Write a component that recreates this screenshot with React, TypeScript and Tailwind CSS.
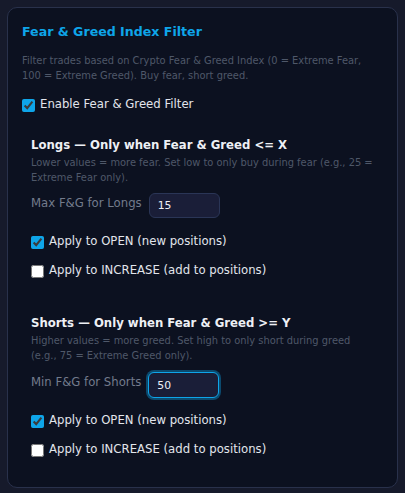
import React from "react";

function Check({ checked, label }: { checked: boolean; label: string }) {
  return (
    <label className="flex items-center gap-[5px] h-[20px] text-[11.7px] text-[#e2e5ec]">
      <input type="checkbox" defaultChecked={checked} className="m-0 w-[13px] h-[13px] accent-[#0ea5e9]" />
      <span>{label}</span>
    </label>
  );
}

export default function App() {
  return (
    <div className="min-h-[493px] w-[405px] bg-[#161a2b] p-[7px] pb-[9px]" style={{ fontFamily: '"DejaVu Sans", sans-serif' }}>
      <div className="rounded-[10px] border border-[#29314b] bg-[#0c1120] pl-[14px] pr-[20px] pt-[14px] pb-[27px]">
        <h2 className="text-[12.6px] font-bold leading-[20px] text-[#0ea5e9]">Fear &amp; Greed Index Filter</h2>
        <p className="mt-[11px] text-[9.9px] leading-[15px] text-[#4f5869]">
          Filter trades based on Crypto Fear &amp; Greed Index (0 = Extreme Fear, 100 = Extreme Greed). Buy fear, short greed.
        </p>
        <div className="mt-[12px]">
          <Check checked label="Enable Fear & Greed Filter" />
        </div>

        <div className="pl-[9px] mt-[21px]">
          <h3 className="text-[11.7px] font-bold leading-[18px] text-[#eef0f5]">Longs — Only when Fear &amp; Greed &lt;= X</h3>
          <p className="mt-[1px] text-[9.9px] leading-[15px] text-[#4f5869]">
            Lower values = more fear. Set low to only buy during fear (e.g., 25 = Extreme Fear only).
          </p>
          <div className="mt-[8px] flex items-center gap-[7px]">
            <span className="text-[11.7px] text-[#737b8c] -mt-[4px]">Max F&amp;G for Longs</span>
            <input
              defaultValue="15"
              className="w-[71px] h-[25px] rounded-[6px] border border-[#2a3556] bg-[#1a1e38] px-[8px] text-[10.8px] text-[#eef0f5] outline-none"
            />
          </div>
          <div className="mt-[14px] flex flex-col gap-[9px]">
            <Check checked label="Apply to OPEN (new positions)" />
            <Check checked={false} label="Apply to INCREASE (add to positions)" />
          </div>

          <h3 className="mt-[33px] text-[11.7px] font-bold leading-[18px] text-[#eef0f5]">Shorts — Only when Fear &amp; Greed &gt;= Y</h3>
          <p className="mt-[1px] text-[9.9px] leading-[15px] text-[#4f5869]">
            Higher values = more greed. Set high to only short during greed (e.g., 75 = Extreme Greed only).
          </p>
          <div className="mt-[9px] flex items-center gap-[7px]">
            <span className="text-[11.7px] text-[#737b8c] -mt-[4px]">Min F&amp;G for Shorts</span>
            <input
              defaultValue="50"
              className="w-[71px] h-[26px] rounded-[6px] border-[1.5px] border-[#0ea5e9] bg-[#1a1e38] px-[8px] text-[10.8px] text-[#eef0f5] outline-none ring-[2px] ring-[#0c4a6e]"
            />
          </div>
          <div className="mt-[13px] flex flex-col gap-[9px]">
            <Check checked label="Apply to OPEN (new positions)" />
            <Check checked={false} label="Apply to INCREASE (add to positions)" />
          </div>
        </div>
      </div>
    </div>
  );
}
